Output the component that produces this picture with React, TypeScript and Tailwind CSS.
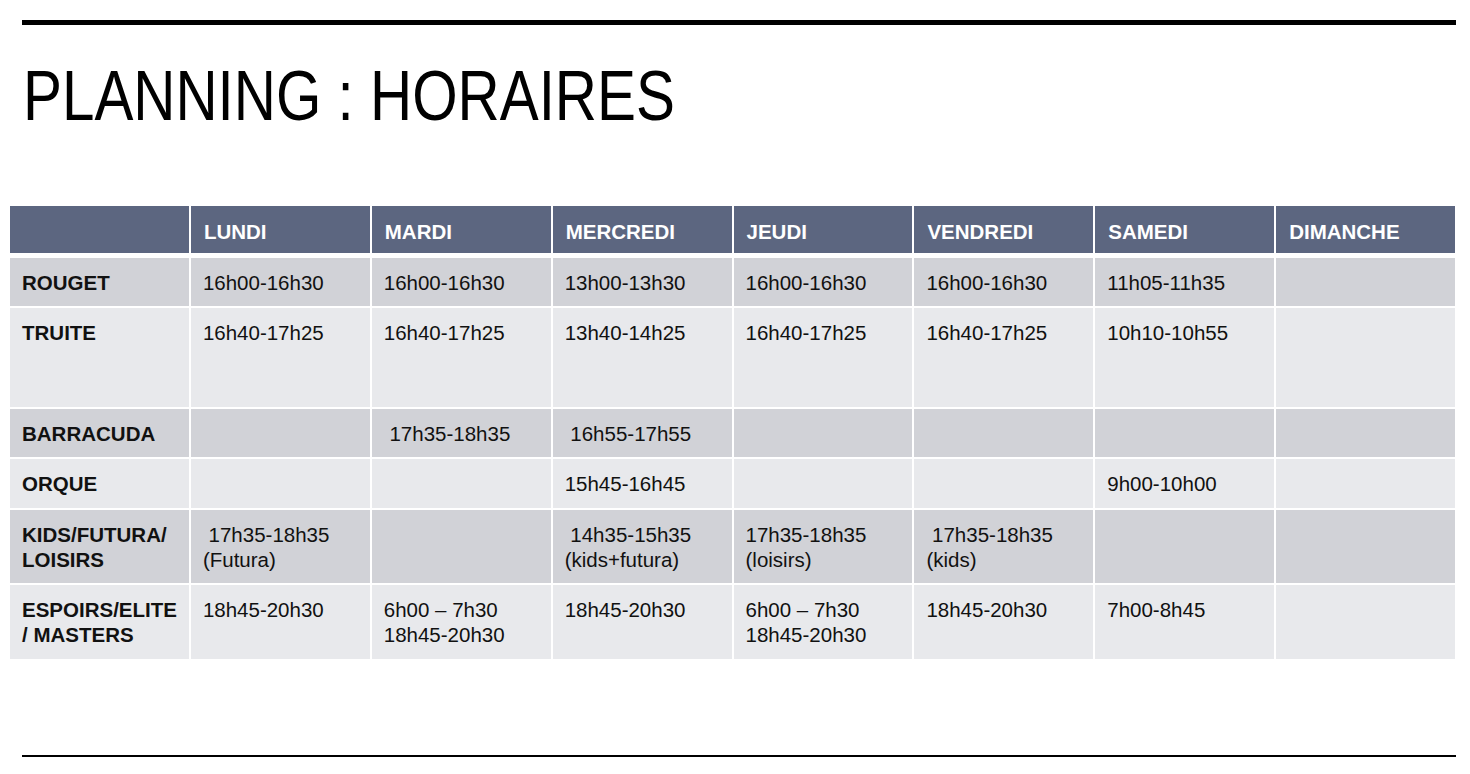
import React from "react";

type Row = { label: string[]; cells: string[][]; h: string; bg: string };

const DARK = "bg-[#d1d2d7]";
const LIGHT = "bg-[#e8e9ec]";

const rows: Row[] = [
  { label: ["ROUGET"], cells: [["16h00-16h30"], ["16h00-16h30"], ["13h00-13h30"], ["16h00-16h30"], ["16h00-16h30"], ["11h05-11h35"], []], h: "h-[48px]", bg: DARK },
  { label: ["TRUITE"], cells: [["16h40-17h25"], ["16h40-17h25"], ["13h40-14h25"], ["16h40-17h25"], ["16h40-17h25"], ["10h10-10h55"], []], h: "h-[99px]", bg: LIGHT },
  { label: ["BARRACUDA"], cells: [[], [" 17h35-18h35"], [" 16h55-17h55"], [], [], [], []], h: "h-[48px]", bg: DARK },
  { label: ["ORQUE"], cells: [[], [], ["15h45-16h45"], [], [], ["9h00-10h00"], []], h: "h-[49px]", bg: LIGHT },
  { label: ["KIDS/FUTURA/", "LOISIRS"], cells: [[" 17h35-18h35", "(Futura)"], [], [" 14h35-15h35", "(kids+futura)"], ["17h35-18h35", "(loisirs)"], [" 17h35-18h35", "(kids)"], [], []], h: "h-[73px]", bg: DARK },
  { label: ["ESPOIRS/ELITE", "/ MASTERS"], cells: [["18h45-20h30"], ["6h00 \u2013 7h30", "18h45-20h30"], ["18h45-20h30"], ["6h00 \u2013 7h30", "18h45-20h30"], ["18h45-20h30"], ["7h00-8h45"], []], h: "h-[74px]", bg: LIGHT },
];

const days = ["LUNDI", "MARDI", "MERCREDI", "JEUDI", "VENDREDI", "SAMEDI", "DIMANCHE"];

export default function App() {
  return (
    <div className="w-[1470px] h-[774px] bg-white relative overflow-hidden" style={{ fontFamily: '"Liberation Sans", Arial, sans-serif' }}>
      <div className="pt-[20px] pl-[22px] pr-[14px]">
        <div className="h-[5px] bg-black" />
      </div>
      <h1 className="pl-[23px] mt-[27px] text-[71px] leading-[88px] font-normal text-black whitespace-nowrap">
        <span className="inline-block origin-left scale-x-[0.822]">PLANNING : HORAIRES</span>
      </h1>
      <div className="ml-[10px] mt-[66px] w-[1445px] flex flex-col text-[20.5px] leading-[25px] text-[#111]">
        <div className="grid grid-cols-8 gap-x-[2px] h-[47px]">
          <div className="bg-[#5c6680]" />
          {days.map((d) => (
            <div key={d} className="bg-[#5c6680] text-white font-bold pl-[13px] pt-[13px]">
              {d}
            </div>
          ))}
        </div>
        <div className="h-[5px]" />
        <div className="flex flex-col gap-y-[2px]">
          {rows.map((r, i) => (
            <div key={i} className={`grid grid-cols-8 gap-x-[2px] ${r.h}`}>
              <div className={`${r.bg} font-bold pl-[12px] pt-[12px]`}>
                {r.label.map((l, j) => (
                  <div key={j}>{l}</div>
                ))}
              </div>
              {r.cells.map((c, j) => (
                <div key={j} className={`${r.bg} pl-[12px] pt-[12px] whitespace-pre`}>
                  {c.map((l, k) => (
                    <div key={k}>{l}</div>
                  ))}
                </div>
              ))}
            </div>
          ))}
        </div>
      </div>
      <div className="absolute left-[22px] top-[755px] w-[1434px] h-[2px] bg-black" />
    </div>
  );
}
